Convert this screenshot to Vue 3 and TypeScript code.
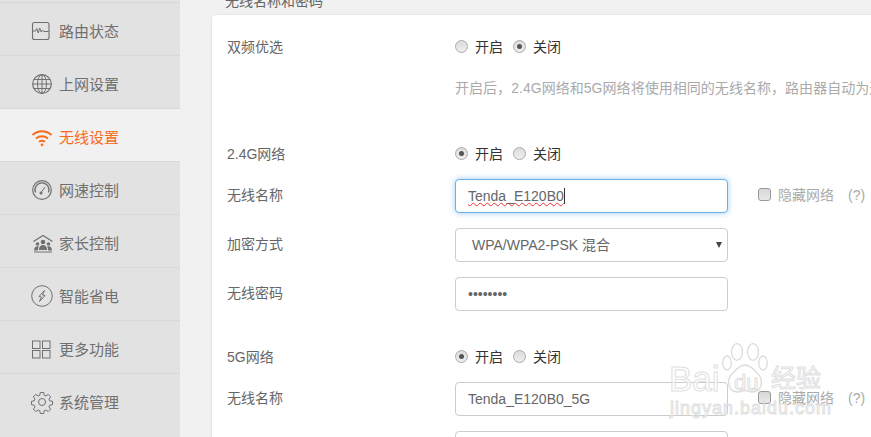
<script setup lang="ts">
interface Nav { label: string; icon: string; active?: boolean }
const nav: Nav[] = [
  { label: '路由状态', icon: 'status' },
  { label: '上网设置', icon: 'globe' },
  { label: '无线设置', icon: 'wifi', active: true },
  { label: '网速控制', icon: 'gauge' },
  { label: '家长控制', icon: 'family' },
  { label: '智能省电', icon: 'power' },
  { label: '更多功能', icon: 'grid' },
  { label: '系统管理', icon: 'gear' },
]
</script>

<template>
  <div class="page">
    <aside class="side">
      <div v-for="n in nav" :key="n.label" class="nav" :class="{ on: n.active }">
        <svg class="ico" viewBox="0 0 24 24" fill="none" stroke="currentColor" stroke-width="1">
          <template v-if="n.icon === 'status'">
            <rect x="2.5" y="3.5" width="16.500" height="17" rx="2" stroke-width="1.100" />
            <path d="M2.500 12h3l1.200-2.500 1.500 4.500 1.500-5 1.500 4 1.300-2 1.200 1.500h5" />
          </template>
          <template v-else-if="n.icon === 'globe'">
            <circle cx="12" cy="12" r="9.300" stroke-width="1.200" />
            <ellipse cx="12" cy="12" rx="4.500" ry="9.300" />
            <path d="M12 2.700v18.600M2.700 12h18.600M4 7.500h16M4 16.500h16" />
          </template>
          <template v-else-if="n.icon === 'wifi'">
            <path d="M2.500 10c5.500-5 13.500-5 19 0M6 13.500c3.500-3 8.500-3 12 0M9 16.800c1.800-1.300 4.200-1.300 6 0" stroke-width="1.800" />
            <circle cx="12" cy="19.800" r="1.400" fill="currentColor" stroke="none" />
          </template>
          <template v-else-if="n.icon === 'gauge'">
            <circle cx="12" cy="12" r="9.300" stroke-width="1.200" />
            <path d="M5.500 14.500a7 7 0 1 1 13 0" stroke-width="1.300" />
            <path d="M15 9l-3.500 5" />
            <circle cx="11" cy="15" r="1.500" fill="currentColor" stroke="none" />
          </template>
          <template v-else-if="n.icon === 'family'">
            <g transform="translate(1,0)">
              <path d="M2.500 10.500L12 4.500l9.500 6" stroke-width="1.300" />
              <g fill="currentColor" stroke="none">
                <circle cx="12" cy="11" r="2.300" />
                <path d="M7.800 19c.2-3.500 2-5 4.200-5s4 1.500 4.200 5z" />
                <circle cx="6.500" cy="13" r="1.800" />
                <path d="M3 19.500c.1-2.800 1.500-4.300 3.500-4.300.5 0 1 .1 1.300.3-.6 1-.9 2.300-1 4z" />
                <circle cx="17.500" cy="13" r="1.800" />
                <path d="M21 19.500c-.1-2.800-1.500-4.300-3.500-4.300-.5 0-1 .1-1.300.3.600 1 .9 2.300 1 4z" />
              </g>
              <path d="M3 21h18" stroke-width="1" />
            </g>
          </template>
          <template v-else-if="n.icon === 'power'">
            <circle cx="12" cy="12" r="10.300" />
            <path d="M14.500 6.500L9 12.500l2.500.5-2 4.500 5.500-6-2.500-.5z" />
          </template>
          <template v-else-if="n.icon === 'grid'">
            <rect x="2.500" y="4" width="7.500" height="7.500" />
            <rect x="12.500" y="4" width="7.500" height="7.500" />
            <rect x="2.500" y="13.500" width="7.500" height="7.500" />
            <rect x="12.500" y="13.500" width="7.500" height="7.500" />
          </template>
          <template v-else>
            <circle cx="12" cy="12" r="3.500" />
            <path d="M10.300 2.500h3.400l.5 2.800 1.700.7 2.300-1.600 2.400 2.400-1.600 2.300.7 1.700 2.800.5v3.400l-2.800.5-.7 1.700 1.600 2.300-2.400 2.400-2.300-1.600-1.700.7-.5 2.800h-3.400l-.5-2.800-1.700-.7-2.300 1.600-2.400-2.400 1.600-2.300-.7-1.700-2.800-.5v-3.400l2.800-.5.7-1.700-1.600-2.300 2.400-2.400 2.300 1.600 1.700-.7z" />
          </template>
        </svg>
        <span>{{ n.label }}</span>
      </div>
    </aside>

    <main class="main">
      <h2 class="title">无线名称和密码</h2>
      <section class="card">
        <div class="row radio-row">
          <label class="lab">双频优选</label>
          <div class="radios">
            <span class="radio" /><span class="opt">开启</span>
            <span class="radio checked" /><span class="opt">关闭</span>
          </div>
        </div>
        <div class="row hint-row">
          <label class="lab" />
          <p class="hint">开启后，2.4G网络和5G网络将使用相同的无线名称，路由器自动为选择最佳的频段</p>
        </div>

        <div class="row radio-row band">
          <label class="lab">2.4G网络</label>
          <div class="radios">
            <span class="radio checked" /><span class="opt">开启</span>
            <span class="radio" /><span class="opt">关闭</span>
          </div>
        </div>
        <div class="row field-row">
          <label class="lab">无线名称</label>
          <div class="input focus"><span class="typed">Tenda_E120B0</span><span class="caret" /></div>
          <span class="check" /><span class="hide">隐藏网络</span><span class="q">(?)</span>
        </div>
        <div class="row field-row">
          <label class="lab">加密方式</label>
          <div class="sel">
            <select class="input select">
              <option>WPA/WPA2-PSK 混合</option>
            </select>
          </div>
        </div>
        <div class="row field-row">
          <label class="lab">无线密码</label>
          <input class="input" type="password" value="12345678" readonly />
        </div>

        <div class="row radio-row band2">
          <label class="lab">5G网络</label>
          <div class="radios">
            <span class="radio checked" /><span class="opt">开启</span>
            <span class="radio" /><span class="opt">关闭</span>
          </div>
        </div>
        <div class="row field-row">
          <label class="lab">无线名称</label>
          <input class="input" type="text" value="Tenda_E120B0_5G" readonly />
          <span class="check" /><span class="hide">隐藏网络</span><span class="q">(?)</span>
        </div>
        <div class="row field-row">
          <label class="lab">加密方式</label>
          <div class="sel">
            <select class="input select">
              <option>WPA/WPA2-PSK 混合</option>
            </select>
          </div>
        </div>
      </section>
    </main>

    <div class="mark" aria-hidden="true">
      <svg class="paw" viewBox="0 0 46 50" fill="rgba(255,255,255,.5)" stroke="#dcdcdc" stroke-width="1.300">
        <ellipse cx="5" cy="20" rx="4.300" ry="7" />
        <ellipse cx="15" cy="9" rx="5.500" ry="8.300" />
        <ellipse cx="31" cy="9" rx="5.500" ry="8.300" />
        <ellipse cx="41" cy="20" rx="4.300" ry="7" />
        <path d="M23 22c6 0 9 5 13 9 6 6 4 18-6 18-3 0-5-1.500-7-1.500s-4 1.500-7 1.500c-10 0-12-12-6-18 4-4 7-9 13-9z" />
      </svg>
      <span class="b1">Bai</span>
      <span class="b2">du</span>
      <span class="b3">经验</span>
      <span class="b4">jingyan.baidu.com</span>
    </div>
  </div>
</template>

<style>
html, body { margin: 0; background: #f1f1f1; }
</style>

<style scoped>
.page {
  position: relative;
  display: flex;
  width: 871px;
  height: 437px;
  overflow: hidden;
  background: #f1f1f1;
  font-family: "Liberation Sans", "Noto Sans CJK SC", sans-serif;
  font-size: 14px;
  color: #666;
}
.side { width: 180px; flex: none; padding-top: 2px; background: #e2e2e2; }
.nav {
  display: flex;
  align-items: center;
  box-sizing: border-box;
  height: 53px;
  padding: 3px 0 0 30px;
  border-top: 1px solid #d8d8d8;
  color: #707070;
  font-size: 15px;
}
.nav span { margin-left: 5px; }
.nav.on { background: #f1f1f1; color: #f96a1c; }
.ico { width: 24px; height: 24px; flex: none; }
.main { flex: 1; min-width: 0; padding-left: 32px; }
.title {
  margin: -9px 0 0 13px;
  height: 24px;
  font-size: 14px;
  line-height: 20px;
  font-weight: 400;
  color: #666;
}
.card {
  width: 760px;
  padding: 22px 0 0 15px;
  height: 600px;
  background: #fff;
  border-radius: 4px;
  box-shadow: 0 0 2px #d0d0d0;
}
.row { display: flex; align-items: center; }
.lab { width: 228px; flex: none; color: #666; line-height: 20px; }
.radio-row { height: 20px; }
.hint-row { height: 20px; margin-top: 21px; }
.band { margin-top: 46px; }
.band2 { margin-top: 36px; }
.field-row { height: 34px; margin-top: 15px; align-items: flex-start; }
.field-row .lab { line-height: 32px; }
.hint { margin: 0; color: #aaa; white-space: nowrap; line-height: 20px; letter-spacing: 0.04px; }
.radios { display: flex; align-items: center; color: #333; margin-top: -2px; }
.radio {
  box-sizing: border-box;
  width: 13px;
  height: 13px;
  border-radius: 50%;
  border: 1px solid #aaa;
  background: linear-gradient(#dcdcdc, #eee);
  display: flex;
  align-items: center;
  justify-content: center;
}
.radio.checked::after {
  content: "";
  width: 5px;
  height: 5px;
  border-radius: 50%;
  background: #555;
}
.opt { margin: 0 10px 0 7px; }
.input {
  box-sizing: border-box;
  display: flex;
  align-items: center;
  width: 273px;
  height: 34px;
  padding: 0 12px;
  border: 1px solid #ccc;
  border-radius: 4px;
  background: #fff;
  color: #666;
  font: inherit;
  outline: none;
}
.focus { border-color: #66afe9; box-shadow: 0 0 6px rgba(102, 175, 233, 0.6); }
.typed { text-decoration: underline wavy #e33; text-decoration-thickness: 1px; text-underline-offset: 1px; }
.caret { width: 1px; height: 16px; background: #333; }
.sel { position: relative; width: 273px; height: 34px; }
.sel::after {
  content: "";
  position: absolute;
  right: 6px;
  top: 14px;
  border-style: solid;
  border-width: 6px 3px 0;
  border-color: #444 transparent transparent;
}
.select { appearance: none; padding: 0 16px; }
.check {
  box-sizing: border-box;
  width: 13px;
  height: 13px;
  margin: 9px 0 0 30px;
  border: 1px solid #999;
  border-radius: 3px;
  background: linear-gradient(#d8d8d8, #e8e8e8);
}
.hide { margin: 6px 0 0 7px; color: #aaa; line-height: 20px; }
.q { margin: 6px 0 0 14px; color: #aaa; line-height: 20px; }
.mark { position: absolute; left: 0; top: 0; width: 871px; height: 437px; pointer-events: none; }
.paw { position: absolute; left: 722px; top: 343px; width: 46px; height: 50px; }
.mark span {
  position: absolute;
  color: rgba(255, 255, 255, 0.6);
  -webkit-text-stroke: 1px #e0e0e0;
  white-space: nowrap;
  line-height: 1;
}
.b1 { left: 669px; top: 361px; font-size: 35px; }
.b2 { left: 734px; top: 372px; font-size: 22px; }
.b3 { left: 771px; top: 366px; font-size: 25px; }
.b4 { left: 670px; top: 399px; font-size: 18px; letter-spacing: 1px; }
</style>
